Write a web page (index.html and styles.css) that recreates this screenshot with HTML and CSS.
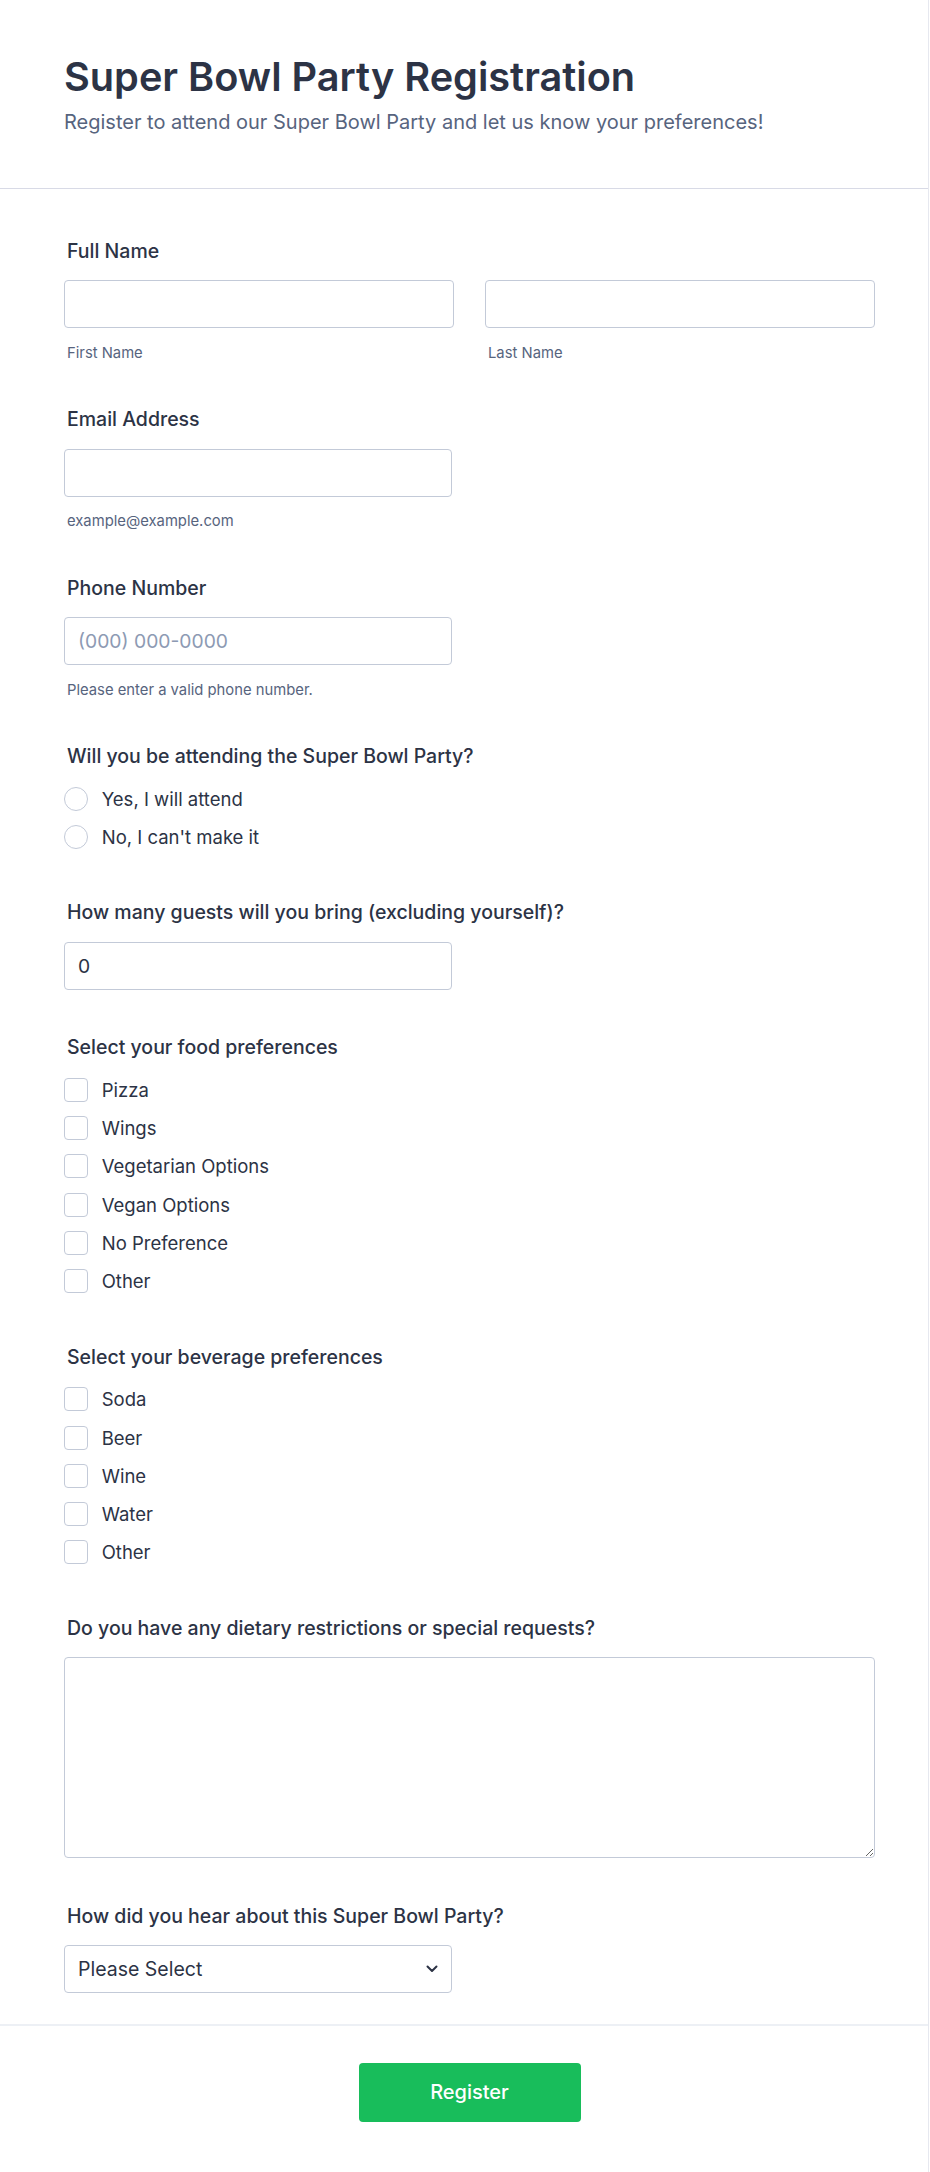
FILE: index.html
```html
<!DOCTYPE html>
<html lang="en">
<head>
<meta charset="utf-8">
<title>Super Bowl Party Registration</title>
<link rel="stylesheet" href="styles.css">
</head>
<body>
<div class="form">
  <header class="form-header">
    <h1 class="form-title">Super Bowl Party Registration</h1>
    <p class="form-subtitle">Register to attend our Super Bowl Party and let us know your preferences!</p>
  </header>

  <div class="form-body">
    <div class="field">
      <label class="field-label">Full Name</label>
      <div class="name-row">
        <div class="name-col">
          <input class="text-input" type="text">
          <span class="field-sub">First Name</span>
        </div>
        <div class="name-col">
          <input class="text-input" type="text">
          <span class="field-sub">Last Name</span>
        </div>
      </div>
    </div>

    <div class="field">
      <label class="field-label">Email Address</label>
      <input class="text-input half" type="email">
      <span class="field-sub">example@example.com</span>
    </div>

    <div class="field">
      <label class="field-label">Phone Number</label>
      <input class="text-input half" type="tel" placeholder="(000) 000-0000">
      <span class="field-sub">Please enter a valid phone number.</span>
    </div>

    <div class="field field-choice">
      <label class="field-label">Will you be attending the Super Bowl Party?</label>
      <div class="options radios">
        <label class="option"><span class="radio"></span><span class="option-text">Yes, I will attend</span></label>
        <label class="option"><span class="radio"></span><span class="option-text">No, I can't make it</span></label>
      </div>
    </div>

    <div class="field">
      <label class="field-label">How many guests will you bring (excluding yourself)?</label>
      <input class="text-input half" type="text" value="0">
    </div>

    <div class="field field-choice">
      <label class="field-label">Select your food preferences</label>
      <div class="options checks">
        <label class="option"><span class="check"></span><span class="option-text">Pizza</span></label>
        <label class="option"><span class="check"></span><span class="option-text">Wings</span></label>
        <label class="option"><span class="check"></span><span class="option-text">Vegetarian Options</span></label>
        <label class="option"><span class="check"></span><span class="option-text">Vegan Options</span></label>
        <label class="option"><span class="check"></span><span class="option-text">No Preference</span></label>
        <label class="option"><span class="check"></span><span class="option-text">Other</span></label>
      </div>
    </div>

    <div class="field field-choice">
      <label class="field-label">Select your beverage preferences</label>
      <div class="options checks">
        <label class="option"><span class="check"></span><span class="option-text">Soda</span></label>
        <label class="option"><span class="check"></span><span class="option-text">Beer</span></label>
        <label class="option"><span class="check"></span><span class="option-text">Wine</span></label>
        <label class="option"><span class="check"></span><span class="option-text">Water</span></label>
        <label class="option"><span class="check"></span><span class="option-text">Other</span></label>
      </div>
    </div>

    <div class="field">
      <label class="field-label">Do you have any dietary restrictions or special requests?</label>
      <textarea class="text-area"></textarea>
    </div>

    <div class="field">
      <label class="field-label">How did you hear about this Super Bowl Party?</label>
      <div class="select-wrap">
        <select class="select">
          <option>Please Select</option>
        </select>
        <svg class="chevron" width="12" height="8" viewBox="0 0 12 8"><path d="M1.5 1.5 L6 6 L10.5 1.5" fill="none" stroke="#2c3345" stroke-width="2" stroke-linecap="round" stroke-linejoin="round"/></svg>
      </div>
    </div>
  </div>

  <footer class="form-footer">
    <button class="submit" type="button">Register</button>
  </footer>
</div>
</body>
</html>
```

FILE: styles.css
```css
* { box-sizing: border-box; }

body {
  margin: 0;
  background: #ffffff;
  font-family: Inter, "Noto Sans", "Liberation Sans", sans-serif;
  color: #2c3345;
}

.form {
  width: 929px;
  min-height: 2172px;
  border-right: 1px solid #e6e8ef;
  background: #ffffff;
}

.form-header {
  height: 189px;
  padding: 53px 64px 0;
  border-bottom: 1px solid #d8dae6;
}

.form-title {
  margin: 0;
  font-size: 39.7px;
  line-height: 48px;
  font-weight: 600;
  color: #2c3345;
}

.form-subtitle {
  margin: 8.5px 0 0;
  font-size: 20px;
  line-height: 24px;
  color: #57647e;
}

.form-body {
  padding: 49.8px 0 31px 64px;
  width: 875px;
  display: flex;
  flex-direction: column;
  gap: 45.5px;
}

.field {
  display: flex;
  flex-direction: column;
  align-items: flex-start;
}

.field-choice { padding-bottom: 6px; }

.field-label {
  display: block;
  font-size: 19.5px;
  line-height: 24px;
  font-weight: 500;
  color: #2c3345;
  margin: 0 0 17.5px 3px;
}

.name-row {
  display: flex;
  gap: 31px;
  width: 811px;
}

.name-col {
  flex: 1;
  display: flex;
  flex-direction: column;
}

.text-input {
  width: 100%;
  height: 48px;
  border: 1px solid #c3cad8;
  border-radius: 4px;
  padding: 0 13px;
  font-family: inherit;
  font-size: 19.3px;
  color: #2c3345;
  background: #ffffff;
  outline: none;
}

.text-input.half { width: 388px; }

.text-input::placeholder { color: #8d9ab3; }

.field-sub {
  display: block;
  margin: 15.5px 0 0 3px;
  font-size: 14.8px;
  line-height: 18px;
  color: #57647e;
}

.options {
  display: flex;
  flex-direction: column;
  margin-top: 1px;
}

.options.radios { gap: 14px; }
.options.checks { gap: 14.3px; }

.option {
  display: flex;
  align-items: center;
  height: 24px;
}

.radio, .check {
  flex: none;
  width: 24px;
  height: 24px;
  border: 1px solid #c3cad8;
  background: #ffffff;
}

.radio { border-radius: 50%; }
.check { border-radius: 4px; }

.option-text {
  margin-left: 13.7px;
  font-size: 18.5px;
  line-height: 24px;
  color: #2c3345;
}

.text-area {
  display: block;
  width: 811px;
  height: 201px;
  border: 1px solid #c3cad8;
  border-radius: 4px;
  font-family: inherit;
  font-size: 19.5px;
  padding: 12px 13px;
  color: #2c3345;
  outline: none;
}

.select-wrap {
  position: relative;
  width: 388px;
}

.select {
  width: 100%;
  height: 48px;
  appearance: none;
  -webkit-appearance: none;
  border: 1px solid #c3cad8;
  border-radius: 4px;
  background: #ffffff;
  padding: 0 40px 0 13px;
  font-family: inherit;
  font-size: 19.5px;
  color: #2c3345;
  outline: none;
}

.chevron {
  position: absolute;
  right: 14px;
  top: 20px;
  pointer-events: none;
}

.form-footer {
  border-top: 2px solid #edf0f5;
  padding: 36.5px 53px 50px 64px;
  display: flex;
  justify-content: center;
}

.submit {
  width: 222px;
  height: 59px;
  border: none;
  border-radius: 4px;
  background: #18bd5b;
  color: #ffffff;
  font-family: inherit;
  font-size: 20px;
  font-weight: 500;
}
```
